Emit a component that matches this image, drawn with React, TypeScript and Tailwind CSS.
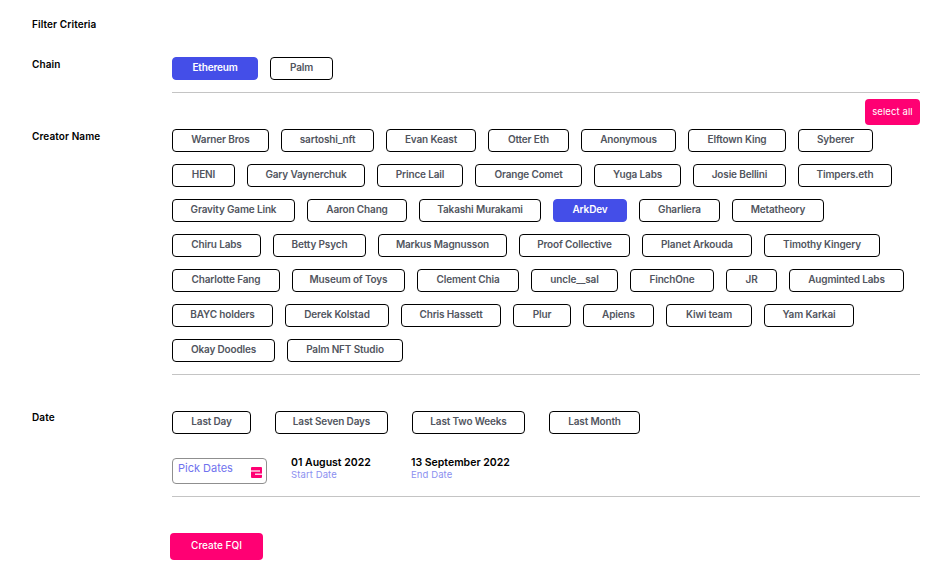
const font = "font-['Inter','Liberation_Sans',sans-serif]";

type Chip = { label: string; w: string; active?: boolean };

const creators: Chip[] = [
  { label: "Warner Bros", w: "w-[97px]" },
  { label: "sartoshi_nft", w: "w-[93px]" },
  { label: "Evan Keast", w: "w-[90px]" },
  { label: "Otter Eth", w: "w-[81px]" },
  { label: "Anonymous", w: "w-[95px]" },
  { label: "Elftown King", w: "w-[98px]" },
  { label: "Syberer", w: "w-[75px]" },
  { label: "HENI", w: "w-[63px]" },
  { label: "Gary Vaynerchuk", w: "w-[118px]" },
  { label: "Prince Lail", w: "w-[86px]" },
  { label: "Orange Comet", w: "w-[107px]" },
  { label: "Yuga Labs", w: "w-[87px]" },
  { label: "Josie Bellini", w: "w-[93px]" },
  { label: "Timpers.eth", w: "w-[94px]" },
  { label: "Gravity Game Link", w: "w-[123px]" },
  { label: "Aaron Chang", w: "w-[100px]" },
  { label: "Takashi Murakami", w: "w-[122px]" },
  { label: "ArkDev", w: "w-[74px]", active: true },
  { label: "Gharliera", w: "w-[81px]" },
  { label: "Metatheory", w: "w-[92px]" },
  { label: "Chiru Labs", w: "w-[89px]" },
  { label: "Betty Psych", w: "w-[93px]" },
  { label: "Markus Magnusson", w: "w-[129px]" },
  { label: "Proof Collective", w: "w-[111px]" },
  { label: "Planet Arkouda", w: "w-[110px]" },
  { label: "Timothy Kingery", w: "w-[116px]" },
  { label: "Charlotte Fang", w: "w-[108px]" },
  { label: "Museum of Toys", w: "w-[113px]" },
  { label: "Clement Chia", w: "w-[102px]" },
  { label: "uncle__sal", w: "w-[87px]" },
  { label: "FinchOne", w: "w-[84px]" },
  { label: "JR", w: "w-[51px]" },
  { label: "Augminted Labs", w: "w-[115px]" },
  { label: "BAYC holders", w: "w-[101px]" },
  { label: "Derek Kolstad", w: "w-[104px]" },
  { label: "Chris Hassett", w: "w-[100px]" },
  { label: "Plur", w: "w-[58px]" },
  { label: "Apiens", w: "w-[71px]" },
  { label: "Kiwi team", w: "w-[86px]" },
  { label: "Yam Karkai", w: "w-[90px]" },
  { label: "Okay Doodles", w: "w-[103px]" },
  { label: "Palm NFT Studio", w: "w-[116px]" },
];

function ChipButton({ label, w, active }: Chip) {
  return (
    <button
      className={
        "h-[23px] rounded-[4px] border text-[10px] leading-[12px] pb-[4px] font-semibold tracking-[-0.15px] text-center " +
        w +
        (active
          ? " bg-[#444ee8] border-[#444ee8] text-white"
          : " bg-white border-black text-[#51555e]")
      }
    >
      {label}
    </button>
  );
}

function Label({ children }: { children: string }) {
  return (
    <div className="w-[140px] shrink-0 text-[10px] leading-[12px] font-semibold tracking-[0.1px] text-black">
      {children}
    </div>
  );
}

function CalendarIcon() {
  return (
    <svg width="11" height="11" viewBox="0 0 11 11" className="shrink-0 block">
      <rect x="0" y="0" width="11" height="11" rx="1" fill="#ff0073" />
      <rect x="0" y="3.4" width="9" height="1.2" fill="#ffffff" />
      <rect x="4" y="6.6" width="7" height="1.2" fill="#ffffff" />
    </svg>
  );
}

export default function App() {
  return (
    <div className={"w-[952px] h-[573px] overflow-hidden bg-white px-8 pt-[18px] " + font}>
      <div className="text-[10px] leading-[12px] font-semibold tracking-[0.1px] text-black">Filter Criteria</div>

      <div className="flex mt-[27px]">
        <div className="pt-[1px]"><Label>Chain</Label></div>
        <div className="flex-1">
          <div className="flex gap-3">
            <ChipButton label="Ethereum" w="w-[86px]" active />
            <ChipButton label="Palm" w="w-[63px]" />
          </div>
          <div className="h-px bg-[#c4c4c4] mt-3" />
        </div>
      </div>

      <div className="flex">
        <div className="pt-[37px]"><Label>Creator Name</Label></div>
        <div className="flex-1">
          <div className="flex justify-end mt-[6px]">
            <button className="w-[55px] h-[26px] rounded-[4px] bg-[#ff0073] text-white text-[9.5px] leading-[24px] tracking-[0.1px]">
              select all
            </button>
          </div>
          <div className="flex flex-wrap gap-3 mt-1">
            {creators.map((c) => (
              <ChipButton key={c.label} {...c} />
            ))}
          </div>
          <div className="h-px bg-[#c4c4c4] mt-3" />
        </div>
      </div>

      <div className="flex mt-9">
        <div><Label>Date</Label></div>
        <div className="flex-1">
          <div className="flex gap-6">
            <ChipButton label="Last Day" w="w-[79px]" />
            <ChipButton label="Last Seven Days" w="w-[113px]" />
            <ChipButton label="Last Two Weeks" w="w-[113px]" />
            <ChipButton label="Last Month" w="w-[91px]" />
          </div>
          <div className="flex mt-6">
            <div className="w-[95px] h-[26px] rounded-[4px] border border-[#8f8f8f] flex items-center justify-between pl-[5px] pr-[4px]">
              <span className="text-[11px] leading-[14px] -mt-[7px] text-[#6f72ee]">Pick Dates</span>
              <span className="mt-[3px]"><CalendarIcon /></span>
            </div>
            <div className="ml-6 w-[120px] -mt-[2px]">
              <div className="text-[10.5px] leading-[14px] font-semibold text-black">01 August 2022</div>
              <div className="text-[9.5px] leading-[10px] tracking-[0.1px] text-[#8b8ff0]">Start Date</div>
            </div>
            <div className="-mt-[2px]">
              <div className="text-[10.5px] leading-[14px] font-semibold text-black">13 September 2022</div>
              <div className="text-[9.5px] leading-[10px] tracking-[0.1px] text-[#8b8ff0]">End Date</div>
            </div>
          </div>
          <div className="h-px bg-[#c4c4c4] mt-3" />
        </div>
      </div>

      <button className="ml-[138px] mt-9 w-[93px] h-[27px] rounded-[4px] bg-[#ff0073] text-white text-[10px] leading-[12px] pb-[3px] font-medium">
        Create FQI
      </button>
    </div>
  );
}
